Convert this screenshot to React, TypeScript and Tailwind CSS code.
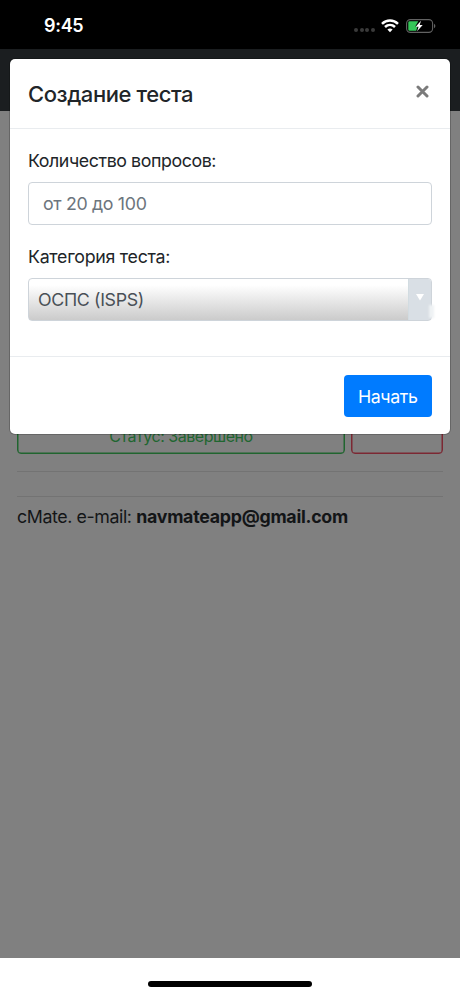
import React from "react";

function StatusBar() {
  return (
    <header className="flex h-[49px] shrink-0 items-start justify-between bg-black pl-[44px] pr-[24px] pt-[14px] text-white">
      <span className="text-[18px] font-semibold leading-[24px] tracking-[-0.3px]">9:45</span>
      <div className="flex h-[24px] items-center">
        <div className="mr-[6px] mt-[8px] flex gap-[1.6px]">
          <i className="size-[4px] rounded-full bg-[#3a3a3a]" />
          <i className="size-[4px] rounded-full bg-[#3a3a3a]" />
          <i className="size-[4px] rounded-full bg-[#3a3a3a]" />
          <i className="size-[4px] rounded-full bg-[#3a3a3a]" />
        </div>
        <svg className="mr-[7px] mt-[-1px]" width="18" height="14" viewBox="0 0 18 14" fill="none" stroke="white" strokeWidth="2.5">
          <path d="M1 4.8C5.5.4 12.5.4 17 4.8" />
          <path d="M4 8C6.9 5.2 11.1 5.2 14 8" />
          <path d="M6.4 10.5Q9 8.3 11.6 10.5L9 13.2Z" fill="white" stroke="none" />
        </svg>
        <svg className="mt-[-1px]" width="30" height="14" viewBox="0 0 30 14">
          <rect x="0.6" y="0.6" width="26" height="12.8" rx="3.8" fill="none" stroke="#626262" strokeWidth="1.1" />
          <path d="M3.6 2.2H12.3L9.2 7.5H11.5L10.2 11.8H3.6Q2.3 11.8 2.3 10.5V3.5Q2.3 2.2 3.6 2.2Z" fill="#35c759" />
          <path d="M15 1.8L9.7 7.7H12.6L11.1 12.2L16.7 6.1H13.7Z" fill="white" />
          <path d="M28 4.8Q29.4 5.5 29.4 7T28 9.2Z" fill="#626262" />
        </svg>
      </div>
    </header>
  );
}

function TestDialog() {
  return (
    <section
      role="dialog"
      className="absolute left-[10px] top-[59px] flex h-[375px] w-[440px] flex-col rounded-[5px] bg-white shadow-[0_0_0_1px_rgba(0,0,0,0.2)]"
    >
      <div className="flex h-[70px] shrink-0 items-start justify-between border-b border-[#e9ecef] pl-[18px] pr-[21px]">
        <h5 className="mt-[19px] text-[22px] font-medium leading-[33px] tracking-[-0.43px]">Создание теста</h5>
        <button aria-label="Close" className="mt-[26px]">
          <svg width="13" height="13" viewBox="0 0 13 13" stroke="#7b7b7b" strokeWidth="3" strokeLinecap="round">
            <path d="M2 2L11 11M11 2L2 11" />
          </svg>
        </button>
      </div>
      <div className="flex h-[228px] shrink-0 flex-col border-b border-[#e9ecef] px-[18px] pt-[18px]">
        <label className="text-[17.8px] leading-[27px] tracking-[-0.42px]">Количество вопросов:</label>
        <div className="mt-[8px] flex h-[43px] items-center rounded-[4px] border border-[#ced4da] px-[14px] pt-[2px] text-[17.8px] tracking-[-0.33px] text-[#6c757d]">
          <span>от 20 до 100</span>
        </div>
        <label className="mt-[18px] text-[17.8px] leading-[27px] tracking-[-0.28px]">Категория теста:</label>
        <div className="mt-[8px] flex h-[43px] rounded-[4px] border border-[#ced4da] bg-gradient-to-b from-white from-15% to-[#cbcbcb] text-[17.8px] tracking-[-0.35px] text-[#495057]">
          <span className="flex flex-1 items-center pl-[9px] pt-[1px]">ОСПС (ISPS)</span>
          <span className="relative flex w-[23px] justify-center rounded-r-[3px] border-l border-[#d2dce1] bg-[#d9dfe5] pt-[14px]">
            <svg width="8" height="8" viewBox="0 0 8 8">
              <path d="M0 1H8L4 7.5Z" fill="white" />
            </svg>
            <i className="absolute -right-[3px] bottom-[2px] h-[13px] w-[5px] bg-[#eff2f4] blur-[1px]" />
          </span>
        </div>
      </div>
      <div className="flex justify-end px-[18px] pt-[18px]">
        <button className="h-[42px] w-[88.5px] rounded-[4px] bg-[#007bff] pt-[2px] text-[17.8px] tracking-[-0.38px] text-white">
          <span>Начать</span>
        </button>
      </div>
    </section>
  );
}

export default function App() {
  return (
    <div className="relative flex h-[996px] w-[460px] flex-col overflow-hidden bg-white font-['Inter','Liberation_Sans',sans-serif] text-[#212529]">
      <StatusBar />
      <nav className="h-[62px] shrink-0 bg-[#1b1e20]" />
      <main className="flex h-[847px] shrink-0 flex-col bg-[#808080] px-[17px] pt-[301px] text-[17.8px] text-[#131517]">
        <div className="flex shrink-0 gap-[6px]">
          <div className="flex h-[42px] w-[328px] items-center justify-center rounded-[4px] border border-[#20652f] pt-[5px] text-[16px] tracking-[-0.47px] text-[#1f6630] shadow-[inset_0_0_0_0.5px_#20652f]">
            Статус: Завершено
          </div>
          <div className="h-[42px] flex-1 rounded-[4px] border border-[#7c2833] shadow-[inset_0_0_0_0.5px_#7c2833]" />
        </div>
        <hr className="mt-[17px] border-[#737373]" />
        <hr className="mt-[24px] border-[#737373]" />
        <p className="mt-[6px] leading-[27px] tracking-[-0.4px]">
          cMate. e-mail: <b className="font-bold tracking-[-0.27px]">navmateapp@gmail.com</b>
        </p>
      </main>
      <footer className="flex flex-1 justify-center pt-[23px]">
        <div className="h-[6px] w-[164px] rounded-full bg-black" />
      </footer>
      <TestDialog />
    </div>
  );
}
